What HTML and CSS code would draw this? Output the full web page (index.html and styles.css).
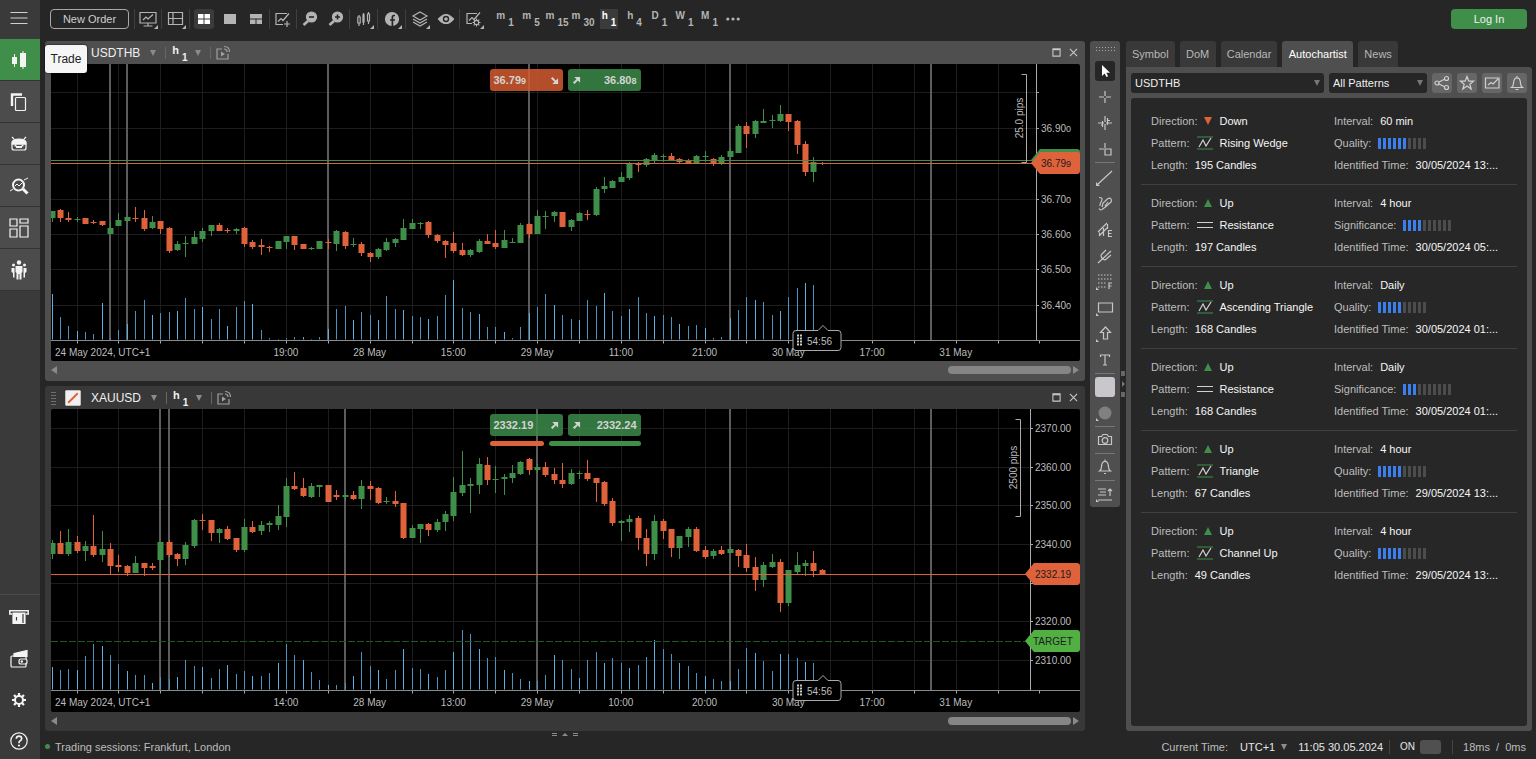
FILE: index.html
```html
<!DOCTYPE html>
<html lang="en">
<head>
<meta charset="utf-8">
<title>Trading platform</title>
<link rel="stylesheet" href="styles.css">
</head>
<body>
<div class="app">
  <nav class="sidebar" aria-label="Main">
    <button class="side-btn menu" aria-label="Menu"><svg class="ic" viewBox="0 0 20 20"><path d="M1.500 4.500h17M1.500 10h17M1.500 15.500h17"/></svg></button>
    <button class="side-btn tile active" aria-label="Trade"><svg class="ic fill" viewBox="0 0 20 20"><path d="M5 4h1v3h2v7h-2v3h-1v-3h-2v-7h2zM13.500 1h1v2h2.500v14h-2.500v2h-1v-2h-2.500v-14h2.500z"/></svg></button>
    <button class="side-btn tile" aria-label="Copy"><svg class="ic" viewBox="0 0 20 20"><path d="M3 14V2.500h10" stroke-width="2.400"/><rect x="6.500" y="5.500" width="10" height="13" rx="1"/></svg></button>
    <button class="side-btn tile" aria-label="Algo"><svg class="ic" viewBox="0 0 20 20"><path class="f" d="M3 8q1-3 7-3t7 3v2H3z"/><path d="M5 5 3 3M15 5l2-2M3 10v4q0 2 2 2h10q2 0 2-2v-4z"/><path d="M6.500 10.500v2M13.500 10.500v2M7 13h6" stroke-width="1.800"/></svg></button>
    <button class="side-btn tile" aria-label="Analyze"><svg class="ic" viewBox="0 0 20 20"><circle cx="9.500" cy="9" r="5.500" stroke-width="2"/><path d="m14 13 4.500 4.500" stroke-width="3"/><path d="m6 10 2-2 2 2 3-3M1 15l3-2M15 4l4-2" stroke-width="1"/></svg></button>
    <button class="side-btn tile" aria-label="Workspaces"><svg class="ic" viewBox="0 0 20 20"><path d="M1 1h7v7H1zM1 11h7v8H1zM11 1h8v4h-8zM11 8h8v11h-8z"/></svg></button>
    <button class="side-btn tile" aria-label="Community"><svg class="ic fill" viewBox="0 0 20 20"><circle cx="10" cy="2.500" r="2.200"/><path d="M6.500 6h7v6l-1 1v6.500h-2V14h-1v5.500h-2V13l-1-1z"/><circle cx="4.500" cy="5" r="1.500"/><circle cx="15.500" cy="5" r="1.500"/><path d="M2.500 8H5.500v9.500H4V13L2.500 12zM17.500 8H14.500v9.500H16V13l1.500-1z"/></svg></button>
    <span class="side-space"></span>
    <button class="side-btn low" aria-label="Deposit"><svg class="ic" viewBox="0 0 20 20"><path d="M3 6H.800V2.800h18.400V6H17" stroke-width="1.500"/><path class="f" d="M4 5h12v10.500H4z"/><path d="M7.500 9v3.500M14 6v9" stroke="#3a3a3a"/></svg></button>
    <button class="side-btn low" aria-label="Wallet"><svg class="ic" viewBox="0 0 20 20"><path class="f" d="m5 4.500 13-3v6H5z"/><rect x="2" y="7" width="15" height="11" rx="1"/><rect x="10" y="10" width="8" height="5" rx="2" fill="#3a3a3a"/><circle class="f" cx="12.800" cy="12.500" r=".6"/></svg></button>
    <button class="side-btn low" aria-label="Settings"><svg class="ic" viewBox="0 0 20 20"><circle cx="10" cy="10" r="4" stroke-width="2"/><path d="M10 3v3M10 14v3M3 10h3M14 10h3M5 5l2 2M13 13l2 2M15 5l-2 2M7 13l-2 2" stroke-width="2.200"/></svg></button>
    <button class="side-btn low" aria-label="Help"><svg class="ic" viewBox="0 0 20 20"><circle cx="10" cy="10" r="8.200"/><path d="M7.300 7.800q.2-2.600 2.700-2.600t2.700 2.300q0 1.500-1.700 2.400-1 .6-1 2v.4" stroke-width="1.700"/><circle class="f" cx="10" cy="14.500" r=".5"/></svg></button>
    <div class="tooltip" role="tooltip">Trade</div>
  </nav>

  <header class="toolbar">
    <button class="new-order">New Order</button>
    <div class="tools">
      <button class="tb sep" aria-label="Monitor"><svg class="ic" viewBox="0 0 20 20"><path d="M2 3.500h16v10.500H2zM10 14v3M5.500 17h9M5 11l3-3 2 2 5-4.500"/><path class="f k" d="M20 16v4h-4z"/></svg></button>
      <button class="tb sep w" aria-label="Layout"><svg class="ic" viewBox="0 0 20 20"><path d="M2.500 3.500h14v12h-14zM7 3.500v12M2.500 9.500h14"/><path class="f k" d="M20 16v4h-4z"/></svg></button>
      <button class="tb sep w" aria-label="Grid"><span class="on"><svg class="ic fill" viewBox="0 0 20 20"><path d="M4 5h5.500v4.500H4zM10.500 5H16v4.500h-5.500zM4 10.500h5.500V15H4zM10.500 10.500H16V15h-5.500z"/></svg></span></button>
      <button class="tb n" aria-label="Single"><svg class="ic fill" viewBox="0 0 20 20"><path d="M4 5h12v10H4z"/></svg></button>
      <button class="tb n" aria-label="Multi"><svg class="ic fill" viewBox="0 0 20 20"><path d="M4 5h12v4.500H4zM4 10.500h5.500V15H4zM10.500 10.500H16V15h-5.500z"/></svg></button>
      <button class="tb sep" aria-label="New chart"><svg class="ic" viewBox="0 0 20 20"><path d="M10 15.500H3V4.500h11M5 12.500l3-3 2 2 6-7M14 12v6M11 15h6"/></svg></button>
      <button class="tb sep n" aria-label="Zoom out"><svg class="ic" viewBox="0 0 20 20"><circle class="f" cx="11.500" cy="8" r="5"/><path d="m8 12-4.500 4" stroke-width="2.600"/><path d="M9 8h5" stroke="#262626" stroke-width="1.600"/></svg></button>
      <button class="tb" aria-label="Zoom in"><svg class="ic" viewBox="0 0 20 20"><circle class="f" cx="11.500" cy="8" r="5"/><path d="m8 12-4.500 4" stroke-width="2.600"/><path d="M9 8h5M11.500 5.500v5" stroke="#262626" stroke-width="1.600"/></svg></button>
      <button class="tb sep w" aria-label="Chart type"><svg class="ic" viewBox="0 0 20 20"><path d="M5 6v2M5 14v3M3.800 8h2.400v6H3.800zM9.500 4v12M14.500 3v2M14.500 12v3"/><path class="f" d="M9 6h1v7H9z"/><path d="M13.500 5h2v7h-2z"/><path class="f k" d="M20 16v4h-4z"/></svg></button>
      <button class="tb sep w" aria-label="Facebook"><svg class="ic" viewBox="0 0 20 20"><circle class="f" cx="10" cy="10" r="6.500"/><path d="M13 6.500h-1q-1.600 0-1.600 1.700V17M8 11h5" stroke="#262626" stroke-width="1.700"/><path class="f k" d="M20 16v4h-4z"/></svg></button>
      <button class="tb sep w" aria-label="Layers"><svg class="ic" viewBox="0 0 20 20"><path d="m10 3 7 4-7 4-7-4zM3 10l7 4 7-4M3 13l7 4 7-4"/><path class="f k" d="M20 16v4h-4z"/></svg></button>
      <button class="tb n" aria-label="Visibility"><svg class="ic" viewBox="0 0 20 20"><path class="f" d="M2.500 10q7.500-9 15 0-7.500 9-15 0z"/><circle cx="10" cy="10" r="2.500" stroke="#262626" stroke-width="1.400"/></svg></button>
      <button class="tb sep w" aria-label="Chart settings"><svg class="ic" viewBox="0 0 20 20"><path d="M8 14.500H3V4.500h10M5 11.500l3-3 2 2 6-7"/><circle cx="12.500" cy="13.500" r="2.200"/><path d="M12.500 9.500v2M12.500 15.500v2M8.500 13.500h2M14.500 13.500h2M9.700 10.700l1 1M14.300 15.300l1 1M15.300 10.700l-1 1M10.700 15.300l-1 1"/><path class="f k" d="M20 16v4h-4z"/></svg></button>
    </div>
    <div class="frames">
      <button class="tf">m<sub>1</sub></button>
      <button class="tf">m<sub>5</sub></button>
      <button class="tf">m<sub>15</sub></button>
      <button class="tf">m<sub>30</sub></button>
      <button class="tf cur">h<sub>1</sub></button>
      <button class="tf s">h<sub>4</sub></button>
      <button class="tf s">D<sub>1</sub></button>
      <button class="tf s">W<sub>1</sub></button>
      <button class="tf s">M<sub>1</sub></button>
      <button class="more" aria-label="More"><svg class="ic fill" viewBox="0 0 20 20"><circle cx="3.500" cy="10" r="2"/><circle cx="10" cy="10" r="2"/><circle cx="16.500" cy="10" r="2"/></svg></button>
    </div>
    <button class="login">Log In</button>
  </header>

  <main class="work">
    <section class="charts">
      <article class="chart first">
        <header class="chart-head">
          <span class="grip"></span>
          <button class="link" aria-label="Link chart"><svg class="ic" viewBox="0 0 20 20"><path class="f" d="M3 3h14v14H3z"/><path d="m5 15 10-10" stroke="#e0623a" stroke-width="2"/></svg></button>
          <button class="sym">USDTHB <i class="dd"></i></button>
          <button class="htf"><span class="tf">h<sub>1</sub></span><i class="dd"></i></button>
          <button class="cast" aria-label="Share"><svg class="ic" viewBox="0 0 20 20"><path d="M9 6H4v10h11v-5"/><path class="f k" d="m8 8.500 4 2.500-4 2.500z"/><path d="M11 6q3 0 3 3M11 3.500q5.500 0 5.500 5.500"/></svg></button>
          <span class="push"></span>
          <button class="win" aria-label="Maximize"><svg class="ic" viewBox="0 0 10 10"><path d="M1 1h8v8H1zM1 2h8"/></svg></button>
          <button class="win" aria-label="Close"><svg class="ic" viewBox="0 0 10 10"><path d="m1 1 8 8M9 1 1 9"/></svg></button>
        </header>
        <div class="plot">
          <svg class="canvas" id="usdthb" role="img" aria-label="USDTHB chart"></svg>
          <div class="deal">
            <button class="price sell"><span>36.79<small>9</small></span><svg class="ic fill" viewBox="0 0 10 10"><path d="M9 9H2.500L5 6.500 1 2.800 2.800 1l3.700 4L9 2.500z"/></svg></button>
            <button class="price buy"><svg class="ic fill" viewBox="0 0 10 10"><path d="M9 1v6.500L6.500 5 2.800 9 1 7.200 5 3.500 2.500 1z"/></svg><span>36.80<small>8</small></span></button>
          </div>
        </div>
        <div class="scroll"><i class="al"></i><span class="thumb"></span><i class="ar"></i></div>
      </article>

      <article class="chart second">
        <header class="chart-head">
          <span class="grip"></span>
          <button class="link" aria-label="Link chart"><svg class="ic" viewBox="0 0 20 20"><path class="f" d="M1 1h18v18H1z"/><path d="m4 16 12-12" stroke="#e0623a" stroke-width="2.400"/></svg></button>
          <button class="sym">XAUUSD <i class="dd"></i></button>
          <button class="htf"><span class="tf">h<sub>1</sub></span><i class="dd"></i></button>
          <button class="cast" aria-label="Share"><svg class="ic" viewBox="0 0 20 20"><path d="M9 6H4v10h11v-5"/><path class="f k" d="m8 8.500 4 2.500-4 2.500z"/><path d="M11 6q3 0 3 3M11 3.500q5.500 0 5.500 5.500"/></svg></button>
          <span class="push"></span>
          <button class="win" aria-label="Maximize"><svg class="ic" viewBox="0 0 10 10"><path d="M1 1h8v8H1zM1 2h8"/></svg></button>
          <button class="win" aria-label="Close"><svg class="ic" viewBox="0 0 10 10"><path d="m1 1 8 8M9 1 1 9"/></svg></button>
        </header>
        <div class="plot">
          <svg class="canvas" id="xauusd" role="img" aria-label="XAUUSD chart"></svg>
          <div class="deal">
            <button class="price buy"><span>2332.19</span><svg class="ic fill" viewBox="0 0 10 10"><path d="M9 1v6.500L6.500 5 2.800 9 1 7.200 5 3.500 2.500 1z"/></svg></button>
            <button class="price buy"><svg class="ic fill" viewBox="0 0 10 10"><path d="M9 1v6.500L6.500 5 2.800 9 1 7.200 5 3.500 2.500 1z"/></svg><span>2332.24</span></button>
            <div class="mood"><span style="width:36%"></span><span></span></div>
          </div>
        </div>
        <div class="scroll"><i class="al"></i><span class="thumb"></span><i class="ar"></i></div>
      </article>
      <div class="split-h"><b></b><i></i><b></b></div>
    </section>

    <aside class="draw" aria-label="Drawing tools">
      <span class="handle"></span>
      <button class="on" aria-label="Pointer"><svg class="ic fill" viewBox="0 0 20 20"><path d="M7 4v11l2.600-2.400L11.500 16l1.600-.8-1.800-3.500H15z"/></svg></button>
      <button aria-label="Crosshair"><svg class="ic" viewBox="0 0 20 20"><path d="M10 4v5M10 11v5M4 10h5M11 10h5"/></svg></button>
      <button aria-label="Market snap"><svg class="ic" viewBox="0 0 20 20"><path d="M10 3v6M10 11v6M3 10h6M11 10h6M7.500 8v6M12.500 5v7M6 12h1.500M12.500 7.500H15"/></svg></button>
      <button aria-label="Measure"><svg class="ic" viewBox="0 0 20 20"><path d="M10 4v5M4 10h5M10 10h6v6h-6z"/></svg></button>
      <hr>
      <button aria-label="Line"><svg class="ic" viewBox="0 0 20 20"><path d="m3 16 14-13"/><path class="f k" d="m1 14 4 4H1z"/></svg></button>
      <button aria-label="Pencil"><svg class="ic" viewBox="0 0 20 20"><path d="M4 3.500q4.500 0 2.500 3.500t-1.500 5M7 13l1-4 5-4.500q2-1 3 .5t0 3l-5 4.500-4 3q-2 1-3-1M10 12l3-4"/></svg></button>
      <button aria-label="Equidistant lines"><svg class="ic" viewBox="0 0 20 20"><path d="M3 12 12 3M4.500 12.500V16M8.500 8v8M12.500 4v5M4 16l9-9M17 10.500h-3.500v6H17M13.500 13.500h3"/></svg></button>
      <button aria-label="Pitchfork"><svg class="ic" viewBox="0 0 20 20"><path d="m3 17 13-12M6 9l5-5M10 14l6-5M6 9q0 4 4 5"/></svg></button>
      <button aria-label="Fibonacci"><svg class="ic" viewBox="0 0 20 20"><path d="M3 3h14M3 7h14M3 11h9M3 15h8" stroke-dasharray="1.500 1.500"/><path d="M14 17v-6h3M14 14h2.500"/><path class="f k" d="m1 15 3 3H1z"/></svg></button>
      <button aria-label="Rectangle"><svg class="ic" viewBox="0 0 20 20"><path d="M3.500 5h14v9h-14z"/><path class="f k" d="m1 15 3 3H1z"/></svg></button>
      <button aria-label="Arrow"><svg class="ic" viewBox="0 0 20 20"><path d="m10.500 3 5 5.500h-3V15h-4V8.500h-3z"/><path class="f k" d="m1 15 3 3H1z"/></svg></button>
      <button aria-label="Text"><svg class="ic" viewBox="0 0 20 20"><path d="M5.500 7V5h9v2M10 5v10M8 15h4"/></svg></button>
      <hr>
      <button aria-label="Color"><span class="swatch"></span></button>
      <button aria-label="Opacity"><svg class="ic" viewBox="0 0 20 20"><circle cx="10" cy="10" r="6.500" fill="#808080" stroke="none"/><path class="f k" d="m1 15 3 3H1z"/></svg></button>
      <hr>
      <button aria-label="Snapshot"><svg class="ic" viewBox="0 0 20 20"><path d="M3.500 6.500h3l1.500-2h4l1.500 2h3v8h-13z"/><circle cx="10" cy="10.500" r="2.800"/></svg></button>
      <hr>
      <button aria-label="Alerts"><svg class="ic" viewBox="0 0 20 20"><path d="M4.500 14q2-1.500 2-4t1-4.300q2.500-2.600 5 0 1 1.800 1 4.300t2 4zM9 16.500h2M10 2.500v2"/></svg></button>
      <hr>
      <button aria-label="Objects"><svg class="ic" viewBox="0 0 20 20"><path d="M3 5h8M5 8h6M3 11h8M3 16h14M15 12V5M13 7l2-2 2 2"/><path class="f k" d="m1 15 3 3H1z"/></svg></button>
    </aside>

    <div class="split-v"><b></b><i></i><b></b></div>

    <aside class="panel">
      <div class="tabs" role="tablist">
        <button role="tab">Symbol</button>
        <button role="tab">DoM</button>
        <button role="tab">Calendar</button>
        <button role="tab" aria-selected="true" class="active">Autochartist</button>
        <button role="tab">News</button>
      </div>
      <div class="panel-body">
        <div class="filters">
          <label class="pick grow"><select aria-label="Symbol"><option>USDTHB</option></select></label>
          <label class="pick"><select aria-label="Pattern"><option>All Patterns</option></select></label>
          <button class="sq" aria-label="Share"><svg class="ic" viewBox="0 0 20 20"><circle cx="5" cy="10" r="2"/><circle cx="14.500" cy="5.500" r="2"/><circle cx="14.500" cy="14.500" r="2"/><path d="m7 9 5.500-2.700M7 11l5.500 2.700"/></svg></button>
          <button class="sq" aria-label="Favorite"><svg class="ic" viewBox="0 0 20 20"><path d="m10 3.500 1.800 4.700h4.700l-3.700 3 1.400 4.800-4.200-2.900L5.800 16l1.400-4.800-3.700-3h4.700z"/></svg></button>
          <button class="sq" aria-label="Chart"><svg class="ic" viewBox="0 0 20 20"><path d="M3.500 5h13.500v10H3.500zM6 12l3-2.500 2 1.500 5-5"/></svg></button>
          <button class="sq" aria-label="Alert"><svg class="ic" viewBox="0 0 20 20"><path d="M4.500 14.500q2-1.500 2-4t1-4.300q2.500-2.600 5 0 1 1.800 1 4.300t2 4zM8.500 16.500h3M10 3v1"/></svg></button>
        </div>
        <div class="list" id="list"></div>
      </div>
    </aside>
  </main>

  <footer class="status">
    <span class="dot"></span><span>Trading sessions: Frankfurt, London</span>
    <span class="push"></span>
    <span class="cur-label">Current Time:</span>
    <button class="zone">UTC+1 <i class="dd"></i></button>
    <span class="clock">11:05 30.05.2024</span>
    <label class="quick">ON <input type="checkbox" checked></label>
    <span class="ping">18ms&nbsp; /&nbsp; 0ms</span>
  </footer>
</div>
<script src="app.js"></script>
</body>
</html>
```

FILE: styles.css
```css
* { box-sizing: border-box; }
body { margin: 0; background: #262626; color: #bdbdbd; font: 11px/14px "Liberation Sans", Arial, sans-serif; }
button, select, input { font: inherit; color: inherit; }
button { background: none; border: 0; padding: 0; margin: 0; display: flex; align-items: center; justify-content: center; cursor: pointer; }
.app { display: grid; grid-template: 41px minmax(0, 1fr) 28px / 40px minmax(0, 1fr); height: 100vh; min-height: 620px; }
.ic { width: 20px; height: 20px; fill: none; stroke: currentColor; stroke-width: 1.2; display: block; flex: none; }
.ic.fill, .ic .f { fill: currentColor; }
.ic.fill, .ic .k { stroke: none; }
.dd { width: 0; height: 0; border: 3px solid transparent; border-top: 6px solid #8c8c8c; border-bottom: 0; display: inline-block; flex: none; }
.push { flex: 1; }

/* sidebar */
.sidebar { grid-row: 1 / -1; background: #3a3a3a; display: flex; flex-direction: column; position: relative; color: #f4f4f4; }
.side-btn { height: 42px; flex: none; padding-right: 3px; }
.side-btn.menu { height: 39px; padding-bottom: 3px; color: #d0d0d0; }
.tile { background: #4c4c4c; border-bottom: 1px solid #333; }
.tile.active { background: #3f8f4b; }
.low { height: 41px; padding-top: 4px; }
.side-space { flex: 1; border-bottom: 1px solid #4a4a4a; }
.tooltip { position: absolute; left: 45px; top: 45px; z-index: 5; width: 42px; height: 28px; line-height: 28px; text-align: center; background: #f6f6f6; color: #222; border-radius: 3px; font-size: 12px; box-shadow: 0 0 2px #000; }

/* toolbar */
.toolbar { display: flex; align-items: center; padding: 0 9px 4px 10px; }
.new-order { height: 20px; width: 79px; border: 1px solid #a8a8a8; border-radius: 4px; color: #cfcfcf; }
.tools, .frames { display: flex; align-items: center; }
.tools { margin-left: 5px; }
.tb { width: 27px; height: 20px; position: relative; color: #b4b4b4; }
.tb.w { width: 28px; }
.tb.n { width: 26px; }
.tb.sep { border-left: 1px solid #3f3f3f; }
.tb .on { background: #3b3b3b; border-radius: 3px; color: #fff; }
.frames { margin-left: 5px; }
.tf { width: 26px; height: 20px; font-size: 10px; line-height: 10px; font-weight: 700; color: #b4b4b4; align-items: flex-start; padding-top: 2px; display: flex; justify-content: center; }
.tf sub { font-size: 10px; line-height: 10px; margin: 7px 0 0 3px; vertical-align: baseline; }
.tf.s { width: 25px; }
.tf.cur { color: #fff; background: linear-gradient(#3b3b3b, #3b3b3b) center / 18px 20px no-repeat; }
.more { width: 22px; color: #b4b4b4; }
.more .ic { width: 16px; }
.login { margin-left: auto; width: 76px; height: 20px; border-radius: 4px; background: #3f8f4b; color: #f0f0f0; }

/* work area */
.work { display: flex; padding: 0 4px 0 5px; min-height: 0; }
.charts { flex: 1; min-width: 0; display: flex; flex-direction: column; gap: 5px; position: relative; }
.chart { display: flex; flex-direction: column; min-height: 0; padding: 0 5px 0 6px; border-radius: 3px; background: #383838; }
.chart.first { flex: 340 1 0; background: #4f4f4f; }
.chart.second { flex: 345 1 0; }
.chart-head { height: 23px; flex: none; display: flex; align-items: center; color: #f0f0f0; font-size: 12px; }
.grip { width: 5px; height: 14px; background: radial-gradient(#9a9a9a 35%, transparent 40%) 0 0 / 2px 3px; opacity: .6; }
.link { margin-left: 9px; }
.link .ic { width: 16px; height: 16px; }
.sym { margin-left: 10px; gap: 10px; }
.htf { margin-left: 9px; height: 12px; border-left: 1px solid #666; padding-left: 6px; gap: 7px; }
.htf .tf { width: 16px; color: #f0f0f0; font-size: 11px; justify-content: flex-start; }
.htf .tf sub { margin-top: 8px; }
.cast { margin-left: 9px; height: 12px; border-left: 1px solid #666; color: #a0a0a0; padding-left: 2px; }
.win { width: 17px; height: 17px; color: #c8c8c8; }
.win:last-child { margin-right: -2px; }
.win .ic { width: 9px; height: 9px; }
.plot { flex: 1; min-height: 0; position: relative; background: #000; border-radius: 2px; overflow: hidden; }
.canvas { position: absolute; inset: 0; width: 100%; height: 100%; font-size: 10px; fill: #bdbdbd; }
.deal { position: absolute; left: 50%; top: 5px; width: 151px; margin-left: -76px; display: flex; flex-wrap: wrap; gap: 5px; }
.price { width: 73px; height: 22px; padding: 0 4px; border-radius: 3px; justify-content: space-between; font-weight: 700; color: #d3d3d3; }
.price small { font-size: 9px; }
.price .ic { width: 9px; height: 9px; }
.sell { background: #d45a30d9; }
.buy { background: #3c8a49d9; }
.mood { width: 100%; display: flex; gap: 5px; }
.mood span { height: 5px; border-radius: 3px; background: #e0623a; }
.mood span + span { flex: 1; background: #3f8f4b; }
.scroll { height: 20px; flex: none; display: flex; align-items: center; gap: 2px; padding: 0 1px 2px 0; }
.second .scroll { height: 19px; }
.al, .ar { width: 0; height: 0; border: 4px solid transparent; border-right: 6px solid #8a8a8a; border-left: 0; margin-right: auto; }
.ar { border-right: 0; border-left: 6px solid #8a8a8a; margin: 0; }
.thumb { width: 12%; height: 8px; border-radius: 4px; background: #858585; }
.split-h { position: absolute; left: 0; right: 0; top: 100%; height: 7px; display: flex; gap: 5px; align-items: center; justify-content: center; }
.split-h b { width: 5px; height: 3px; border: solid #8a8a8a; border-width: 1px 0; }
.split-h i { border: 3px solid transparent; border-bottom: 3px solid #8a8a8a; border-top: 0; }

/* drawing tools */
.draw { width: 30px; margin-left: 5px; align-self: flex-start; background: #4f4f4f; border-radius: 3px; padding: 0 5px; color: #c6c6c6; }
.draw .handle { display: block; height: 6px; margin: 5px 0 9px; background: radial-gradient(#a8a8a8 35%, transparent 45%) 0 0 / 3px 3px; }
.draw button { width: 20px; height: 20px; margin: 0 0 6px; border-radius: 3px; }
.draw button.on { background: #262626; color: #fff; }
.draw hr { height: 1px; border: 0; background: #777; margin: -3px 0 3px; }
.draw hr:first-of-type { margin-bottom: 5px; }
.draw button:last-child { margin-bottom: 3px; }
.swatch { width: 20px; height: 20px; border-radius: 3px; background: #c9c6cc; }
.split-v { width: 6px; padding-top: 330px; display: flex; flex-direction: column; gap: 5px; align-items: center; }
.split-v b { width: 4px; height: 5px; background: #666; }
.split-v i { border: 3px solid transparent; border-left: 3px solid #777; border-right: 0; }

/* right panel */
.panel { width: 406px; display: flex; flex-direction: column; min-height: 0; }
.tabs { display: flex; gap: 5px; }
.tabs button { height: 26px; padding: 0 6px; background: #393939; border-radius: 3px 3px 0 0; color: #b8b8b8; min-width: 36px; }
.tabs .active { background: #4f4f4f; color: #fff; min-width: 71px; }
.panel-body { flex: 1; min-height: 0; display: flex; flex-direction: column; gap: 5px; background: #4f4f4f; border-radius: 0 3px 3px 3px; padding: 6px 5px 5px; }
.filters { display: flex; gap: 5px; }
.pick { position: relative; width: 98px; }
.pick.grow { flex: 1; width: auto; }
.pick::after { content: ""; position: absolute; right: 4px; top: 7px; border: 3px solid transparent; border-top: 6px solid #777; border-bottom: 0; pointer-events: none; }
.pick select { appearance: none; width: 100%; height: 20px; border: 0; border-radius: 3px; background: #262626; color: #f0f0f0; padding: 0 4px; display: block; }
.sq { width: 20px; height: 20px; border-radius: 3px; background: #666; color: #d0d0d0; }
.list { flex: 1; min-height: 0; overflow: hidden; background: #272727; border-radius: 3px; padding: 5px 10px; }
.signal { display: grid; grid-template-columns: 183px minmax(0, 1fr); padding: 7px 10px 8px; }
.signal + .signal { border-top: 1px solid #404040; }
.signal div { height: 22px; display: flex; align-items: center; gap: 7px; white-space: nowrap; }
.signal b { font-weight: 400; color: #f6f6f6; }
.signal .ic { width: 16px; height: 14px; color: #d0d0d0; }
.up, .down { border: 4px solid transparent; border-top: 0; border-bottom: 8px solid #3f8f4b; }
.down { border-bottom: 0; border-top: 8px solid #e0623a; }
.meter { display: flex; gap: 2px; }
.meter i { width: 3px; height: 11px; background: #4c4c4c; }
.meter i.hit { background: #3b7fee; }

/* status bar */
.status { display: flex; align-items: center; padding: 3px 10px 0 5px; }
.dot { width: 5px; height: 5px; border-radius: 50%; background: #3f8f4b; margin-right: 5px; }
.zone { margin-left: 12px; gap: 6px; color: #e6e6e6; }
.clock { color: #e6e6e6; margin-left: 11px; }
.quick { margin-left: 6px; padding-left: 10px; border-left: 1px solid #444; display: flex; align-items: center; gap: 5px; font-size: 10px; color: #e6e6e6; }
.quick input { appearance: none; width: 21px; height: 14px; margin: 0; border-radius: 3px; background: #505050; }
.ping { margin-left: 11px; padding-left: 10px; border-left: 1px solid #444; }
```

FILE: app.js
```js
const GREEN = '#3f8f4b', RED = '#e0623a';

// Candle: colour, high, body top, body bottom, low, volume top (vertical levels)
const USDTHB = `g,211,211,218,222,294 r,209,210,218,222,317 r,212,218,220,222,326 g,217,219,220,222,331 r,218,218,224,224,332 r,220,222,223,224,334 r,221,221,225,226,303 g,222,228,234,234,338 g,213,220,226,226,330 g,217,217,221,222,324 r,207,218,219,222,311 r,210,218,229,231,300 g,216,222,228,229,315 r,221,221,229,234,313 r,227,228,251,253,312 g,241,244,250,251,311 g,236,243,244,257,298 g,231,237,244,244,309 g,228,231,239,242,307 g,225,225,231,236,319 r,223,225,231,231,309 r,228,230,231,233,326 g,228,229,231,234,307 r,227,228,244,247,301 r,240,242,247,249,304 r,239,245,247,255,330 r,246,247,248,252,338 g,241,241,249,249,339 g,236,236,242,249,338 r,236,236,245,250,337 r,244,244,249,249,337 g,247,248,249,250,339 g,241,241,249,249,337 r,239,242,243,249,329 g,230,231,244,251,309 r,231,232,246,249,306 g,238,244,245,247,320 r,242,244,253,256,312 r,252,253,257,262,315 g,248,249,257,259,320 g,238,242,250,251,296 g,238,239,243,247,309 g,219,228,240,240,310 g,219,223,229,229,316 g,222,223,224,229,317 r,221,222,235,238,319 r,234,235,241,243,316 r,240,241,245,258,295 r,232,243,251,253,280 r,243,250,255,256,308 g,249,250,255,257,312 g,239,241,252,253,314 r,234,241,244,244,327 r,230,243,247,249,327 g,230,240,248,248,332 g,238,242,243,243,338 g,223,225,243,243,327 r,223,224,234,238,313 g,210,216,234,234,307 g,211,216,217,229,294 g,211,212,216,222,305 r,212,212,227,227,315 g,219,220,227,231,319 g,212,213,221,221,320 r,210,214,215,220,300 g,187,189,215,216,306 g,177,186,189,193,293 g,180,181,188,188,311 g,172,177,182,182,316 g,162,163,178,180,309 r,162,163,165,172,297 g,158,159,165,167,313 g,153,155,161,164,316 g,154,156,157,162,315 r,153,156,160,161,317 r,158,159,162,163,324 r,159,161,164,164,326 g,155,156,163,163,325 g,151,156,157,162,328 r,158,159,164,166,338 g,155,157,163,165,337 g,148,151,157,157,318 g,124,126,153,153,310 r,122,126,134,148,297 g,120,121,134,138,300 g,109,121,123,123,302 g,115,120,121,128,315 g,105,114,121,122,311 r,114,114,122,131,297 r,120,121,145,154,288 r,141,144,172,176,283 g,157,162,172,182,285 r,162,163,164,165,0`;
const XAUUSD = `g,540,543,554,559,667 r,531,543,554,554,670 g,529,542,554,556,669 r,536,542,551,553,670 g,541,546,551,561,656 r,515,546,555,557,644 g,531,549,555,562,646 r,543,549,566,574,655 r,555,565,567,572,664 r,565,566,573,576,671 g,556,563,573,573,675 r,563,563,568,576,675 r,563,566,568,570,683 g,542,542,560,573,677 r,540,542,555,557,679 r,553,554,559,566,677 g,542,545,559,565,660 g,519,520,546,548,666 r,514,520,521,530,667 r,520,520,533,541,678 g,528,529,533,543,669 r,526,529,539,540,665 r,538,538,550,552,674 g,519,527,550,552,671 r,521,527,532,533,676 g,521,525,531,535,676 g,521,523,525,532,673 g,505,516,525,530,663 g,478,486,517,527,644 r,472,486,489,490,655 r,478,488,496,497,660 g,483,486,497,498,672 g,485,485,487,497,680 r,485,485,502,502,685 r,490,495,497,500,685 g,494,495,497,501,683 r,491,495,499,500,676 g,480,486,499,509,652 r,481,486,489,500,666 r,487,488,503,504,670 g,497,501,502,504,679 r,491,501,504,507,670 r,503,503,538,539,649 g,525,528,538,538,668 g,524,524,529,543,669 r,523,524,530,536,674 g,519,522,530,532,677 g,511,514,522,531,670 g,477,492,516,521,652 g,451,485,493,496,630 g,478,484,486,513,634 g,458,464,485,494,649 r,457,465,480,485,658 g,466,479,480,493,657 g,474,477,479,495,670 g,465,473,478,483,673 g,461,462,474,475,679 r,458,459,470,475,681 g,464,467,470,473,681 r,462,467,475,477,675 r,468,474,480,484,655 r,463,480,484,488,660 g,469,473,484,485,669 g,471,473,474,479,678 r,460,473,479,481,660 r,478,478,483,502,652 r,481,482,504,506,663 r,498,501,523,526,658 g,520,521,523,541,663 g,515,519,522,532,668 r,516,518,538,550,665 r,529,538,554,566,657 g,515,521,554,560,640 r,519,521,531,539,649 r,529,529,548,557,654 g,536,536,548,559,663 g,527,529,537,547,666 r,527,529,551,552,673 r,546,550,557,559,676 g,549,551,556,559,679 r,546,550,554,555,681 g,547,549,553,553,681 r,549,550,556,567,669 r,544,555,568,572,648 r,557,567,580,591,653 g,562,565,580,587,661 g,554,562,567,568,671 r,559,562,603,612,654 g,570,570,603,606,654 g,552,565,572,574,658 g,560,563,566,576,662 r,551,563,571,577,663 r,569,570,575,575,0`;

const charts = [
  { id: 'usdthb', data: USDTHB, base: 64, span: 297, floor: 340, axis: 44,
    days: [7, 9, 33, 57, 81, 105],
    rows: [[92], [128, '36.90'], [], [199, '36.70'], [234, '36.60'], [269, '36.50'], [305, '36.40']], minor: '0',
    times: ['19:00', '28 May', '15:00', '29 May', '11:00', '21:00', '30 May', '17:00', '31 May'],
    lines: [[160, GREEN], [163, RED]], pips: ['25.0 pips', 74, 162, 54],
    tags: [[160, GREEN, '', ''], [163, RED, '36.79', '9']] },
  { id: 'xauusd', data: XAUUSD, base: 409, span: 303, floor: 690, axis: 50,
    days: [13, 14, 35, 58, 81, 105],
    rows: [[428, '2370.00'], [467, '2360.00'], [505, '2350.00'], [544, '2340.00'], [583], [621, '2320.00'], [660, '2310.00']], minor: '',
    times: ['14:00', '28 May', '13:00', '29 May', '10:00', '20:00', '30 May', '17:00', '31 May'],
    lines: [[574, RED], [641, '#24552a', '7 2']], pips: ['2500 pips', 419, 516, 60],
    tags: [[574, RED, '2332.19', ''], [641, '#52b043', 'TARGET', '']] },
];

function draw(c) {
  const svg = document.getElementById(c.id);
  const { width: W, height: H } = svg.getBoundingClientRect();
  const step = W / 122.9, X = i => i * step + 0.5;
  const Y = v => (v - c.base) * H / c.span;
  const ax = Math.round(W - c.axis), floor = Math.round(Y(c.floor)) + 0.5;
  const rows = c.rows.filter(r => r.length);
  const out = [];
  const line = (x1, y1, x2, y2, col, w = 1, dash = 'none') =>
    out.push(`<line x1="${x1}" y1="${y1}" x2="${x2}" y2="${y2}" stroke="${col}" stroke-width="${w}" stroke-dasharray="${dash}"/>`);
  const text = (x, y, s, anchor = 'start', col = '#bdbdbd', more = '') =>
    out.push(`<text x="${x}" y="${y}" text-anchor="${anchor}" fill="${col}" ${more}>${s}</text>`);
  const crisp = v => Math.round(v) + 0.5;

  for (let i = 3; X(i) < W; i += 5) {
    if (X(i) < ax) line(crisp(X(i)), 0, crisp(X(i)), floor, '#1d1d20');
    line(crisp(X(i)), floor, crisp(X(i)), floor + 3, '#aaa');
  }
  rows.forEach(([v]) => line(0, crisp(Y(v)), ax, crisp(Y(v)), '#1d1d20'));
  c.days.forEach(i => line(Math.round(X(i)), 0, Math.round(X(i)), floor, '#5c5c5c', 2));

  c.data.split(' ').forEach((s, i) => {
    const [k, ...n] = s.split(',');
    const [hi, top, bot, lo, vol] = n.map(v => Y(+v));
    const col = k === 'g' ? GREEN : RED, x = crisp(X(i));
    if (n[4] > 0) line(x, vol, x, floor - 1, i % 3 ? '#4a93bf' : '#5ab0e2');
    line(x, hi, x, lo, col);
    out.push(`<rect x="${x - 3}" y="${Math.round(top)}" width="6" height="${Math.max(1, Math.round(bot - top))}" fill="${col}"/>`);
  });

  c.lines.forEach(([v, col, dash]) => line(0, crisp(Y(v)), ax, crisp(Y(v)), col, 1, dash));
  line(0, floor, W, floor, '#8a8a8a');
  line(ax + 0.5, 0, ax + 0.5, floor, '#aaa');
  rows.forEach(([v, s]) => {
    line(ax, crisp(Y(v)), ax + 3, crisp(Y(v)), '#aaa');
    if (s) text(ax + 5, Y(v) + 4, `${s}<tspan font-size="9">${c.minor}</tspan>`);
  });
  const [label, p1, p2, off] = c.pips, px = W - off + 0.5;
  out.push(`<path d="M${px - 5} ${Y(p1) + 0.5}h5V${Y(p2) + 0.5}h-5" fill="none" stroke="#aaa"/>`);
  text(0, 0, label, 'middle', '#bdbdbd', `transform="translate(${px - 4} ${Y((p1 + p2) / 2)}) rotate(-90)"`);

  c.tags.forEach(([v, col, s, m]) => {
    const y = Math.round(Y(v)), x = ax - 5;
    out.push(`<path d="M${x} ${y}L${x + 9} ${y - 11}H${W - 3}q3 0 3 3V${y + 8}q0 3-3 3H${x + 9}z" fill="${col}"/>`);
    text(s === 'TARGET' ? ax + 3 : ax + 5, y + 4, `${s}<tspan font-size="9">${m}</tspan>`, 'start', '#1c1c1c');
  });

  text(4, floor + 15, '24 May 2024, UTC+1');
  c.times.forEach((s, n) => text(X(28 + n * 10), floor + 15, s, 'middle'));
  const tx = Math.round(X(92.2)), ty = floor - 10;
  out.push(`<path d="M${tx - 27} ${ty}H${tx - 5}L${tx} ${ty - 5}L${tx + 5} ${ty}H${tx + 15}q3 0 3 3V${ty + 17}q0 3-3 3H${tx - 27}q-3 0-3-3V${ty + 3}q0-3 3-3z" fill="#000" stroke="#aaa"/>`);
  out.push(`<path d="M${tx - 25} ${ty + 4}v12M${tx - 22} ${ty + 4}v12" stroke="#ccc" stroke-width="2" stroke-dasharray="2 1"/>`);
  text(tx - 16, floor + 4, '54:56');
  svg.innerHTML = out.join('');
}

const signals = [
  ['Down', 'Rising Wedge', 195, '60 min', 'Quality', 6, '30/05/2024 13:...'],
  ['Up', 'Resistance', 197, '4 hour', 'Significance', 4, '30/05/2024 05:...'],
  ['Up', 'Ascending Triangle', 168, 'Daily', 'Quality', 5, '30/05/2024 01:...'],
  ['Up', 'Resistance', 168, 'Daily', 'Significance', 3, '30/05/2024 01:...'],
  ['Up', 'Triangle', 67, '4 hour', 'Quality', 5, '29/05/2024 13:...'],
  ['Up', 'Channel Up', 49, '4 hour', 'Quality', 5, '29/05/2024 13:...'],
];
document.getElementById('list').innerHTML = signals.map(([dir, pat, len, int, kind, q, time]) => {
  const icon = pat === 'Resistance'
    ? '<path d="M0 4.500h16M0 9.500h16"/>'
    : '<path d="M0 1h16M0 13h16" stroke="#3f8f4b"/><path d="m2 11 4-7 3 6 5-8"/>';
  const bars = Array.from({ length: 10 }, (_, i) => `<i class="${i < q ? 'hit' : ''}"></i>`).join('');
  return `<section class="signal">
    <div>Direction: <i class="${dir.toLowerCase()}"></i><b>${dir}</b></div><div>Interval: <b>${int}</b></div>
    <div>Pattern: <svg class="ic" viewBox="0 0 16 14">${icon}</svg><b>${pat}</b></div><div>${kind}: <span class="meter">${bars}</span></div>
    <div>Length: <b>${len} Candles</b></div><div>Identified Time: <b>${time}</b></div>
  </section>`;
}).join('');

const drawAll = () => charts.forEach(draw);
drawAll();
addEventListener('resize', drawAll);
```
